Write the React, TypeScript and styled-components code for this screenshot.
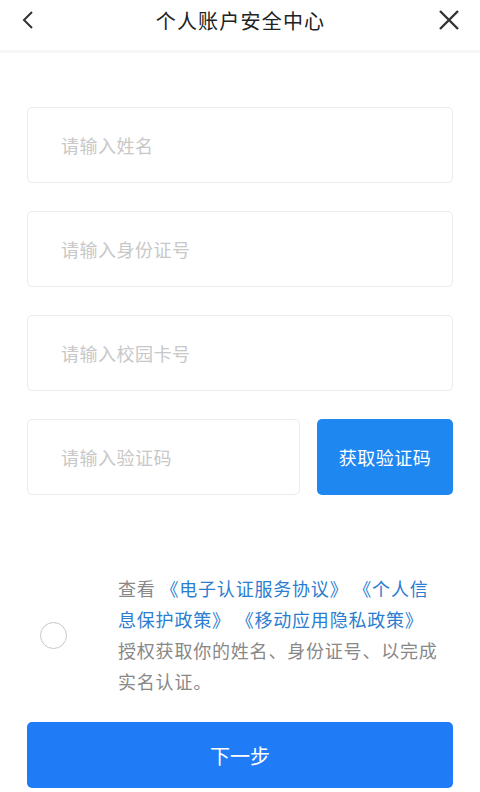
import React, { useState } from "react";
import styled, { createGlobalStyle } from "styled-components";

const GlobalStyle = createGlobalStyle`
  html, body {
    margin: 0;
    padding: 0;
    background: #fff;
    font-family: "Noto Sans CJK SC", "Noto Sans", sans-serif;
  }
  * { box-sizing: border-box; }
`;

const App = () => {
  const [agreed, setAgreed] = useState(false);

  return (
    <>
      <GlobalStyle />
      <Page>
        <Header>
          <IconButton aria-label="back">
            <svg width="14" height="20" viewBox="0 0 14 20">
              <path d="M11 2 L3 10 L11 18" fill="none" stroke="#333" strokeWidth="2" />
            </svg>
          </IconButton>
          <Title>个人账户安全中心</Title>
          <IconButton aria-label="close">
            <svg width="22" height="22" viewBox="0 0 22 22">
              <path d="M2 2 L20 20 M20 2 L2 20" fill="none" stroke="#333" strokeWidth="2.4" />
            </svg>
          </IconButton>
        </Header>

        <Form>
          <Field placeholder="请输入姓名" />
          <Field placeholder="请输入身份证号" />
          <Field placeholder="请输入校园卡号" />
          <CodeRow>
            <CodeField placeholder="请输入验证码" />
            <CodeButton>获取验证码</CodeButton>
          </CodeRow>
        </Form>

        <Agreement>
          <Radio checked={agreed} onClick={() => setAgreed(!agreed)} />
          <AgreeText>
            查看 <Link>《电子认证服务协议》</Link> <Link>《个人信息保护政策》</Link>{" "}
            <Link>《移动应用隐私政策》</Link>
            授权获取你的姓名、身份证号、以完成实名认证。
          </AgreeText>
        </Agreement>

        <NextButton>下一步</NextButton>
      </Page>
    </>
  );
};

export default App;

const Page = styled.div`
  width: 480px;
  height: 792px;
  display: flex;
  flex-direction: column;
  background: #fff;
`;

const Header = styled.div`
  flex: none;
  height: 53px;
  display: flex;
  align-items: center;
  justify-content: space-between;
  padding: 0 20px 10px 21px;
  border-bottom: 3px solid #f6f6f6;
`;

const IconButton = styled.button`
  background: none;
  border: 0;
  padding: 0;
  width: 22px;
  height: 22px;
  display: flex;
  align-items: center;
  justify-content: center;
  cursor: pointer;
  &:first-child {
    justify-content: flex-start;
  }
`;

const Title = styled.div`
  font-size: 20px;
  color: #222;
  letter-spacing: 1.2px;
`;

const Form = styled.div`
  display: flex;
  flex-direction: column;
  gap: 28px;
  padding: 54px 27px 0;
`;

const Field = styled.input`
  flex: none;
  height: 76px;
  width: 100%;
  border: 1px solid #ebebeb;
  border-radius: 5px;
  padding: 0 0 0 33px;
  font-size: 18px;
  letter-spacing: 0.5px;
  font-family: inherit;
  color: #333;
  outline: none;
  &::placeholder {
    color: #c8c8c8;
  }
`;

const CodeField = styled(Field)`
  flex: 1;
  width: auto;
  min-width: 0;
`;

const CodeRow = styled.div`
  display: flex;
  gap: 17px;
`;

const CodeButton = styled.button`
  width: 136px;
  flex: none;
  height: 76px;
  border: 0;
  border-radius: 5px;
  background: #1e87f0;
  color: #fff;
  font-size: 18px;
  letter-spacing: 0.5px;
  font-family: inherit;
`;

const Agreement = styled.div`
  display: flex;
  align-items: center;
  padding: 78px 0 0 40px;
`;

const Radio = styled.div<{ checked: boolean }>`
  flex: none;
  width: 27px;
  height: 27px;
  border-radius: 50%;
  border: 1.5px solid #c8c8c8;
  background: ${({ checked }) => (checked ? "#1e87f0" : "#fff")};
  margin-right: 51px;
  cursor: pointer;
`;

const AgreeText = styled.div`
  width: 324px;
  font-size: 18px;
  line-height: 31px;
  color: #888;
  letter-spacing: 0.8px;
`;

const Link = styled.span`
  color: #2b7dd0;
`;

const NextButton = styled.button`
  flex: none;
  margin: 25px 27px 0;
  height: 66px;
  border: 0;
  border-radius: 5px;
  background: #1f7cf6;
  color: #fff;
  font-size: 20px;
  font-family: inherit;
`;
